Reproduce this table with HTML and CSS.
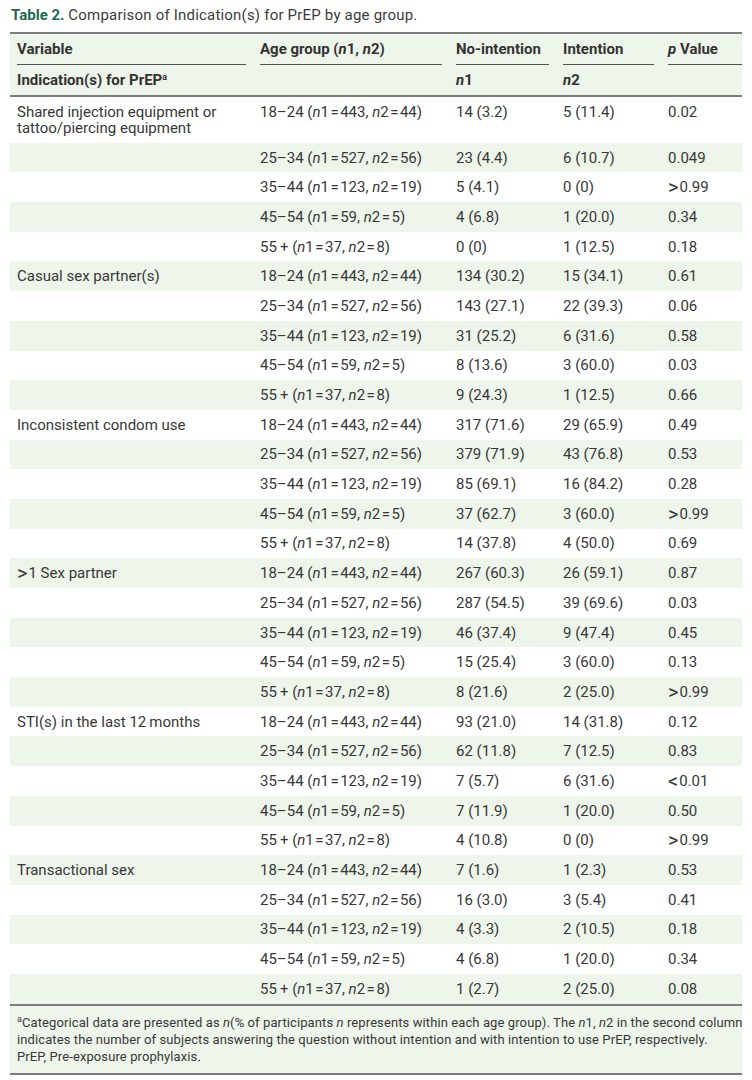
FILE: index.html
```html
<!DOCTYPE html>
<html>
<head>
<meta charset="utf-8">
<link rel="stylesheet" href="styles.css">
</head>
<body>
<div class="wrap">
<p class="caption"><span class="label">Table 2.</span> Comparison of Indication(s) for PrEP by age group.</p>
<table class="tbl">
<colgroup>
<col class="c1"><col class="c2"><col class="c3"><col class="c4"><col class="c5">
</colgroup>
<thead>
<tr class="h1">
<th><div class="u">Variable</div></th>
<th><div class="u">Age group (<i>n</i>1, <i>n</i>2)</div></th>
<th><div class="u">No-intention</div></th>
<th><div class="u">Intention</div></th>
<th class="last"><div class="u"><i>p</i> Value</div></th>
</tr>
<tr class="h2">
<th>Indication(s) for PrEP<sup>a</sup></th>
<th></th>
<th><i>n</i>1</th>
<th><i>n</i>2</th>
<th class="last"></th>
</tr>
</thead>
<tbody>
<tr><td>Shared injection equipment or tattoo/piercing equipment</td><td>18–24 (<i>n</i>1&#8202;=&#8202;443, <i>n</i>2&#8202;=&#8202;44)</td><td>14 (3.2)</td><td>5 (11.4)</td><td class="last">0.02</td></tr>
<tr class="g"><td></td><td>25–34 (<i>n</i>1&#8202;=&#8202;527, <i>n</i>2&#8202;=&#8202;56)</td><td>23 (4.4)</td><td>6 (10.7)</td><td class="last">0.049</td></tr>
<tr><td></td><td>35–44 (<i>n</i>1&#8202;=&#8202;123, <i>n</i>2&#8202;=&#8202;19)</td><td>5 (4.1)</td><td>0 (0)</td><td class="last"><span class="op">&gt;</span>0.99</td></tr>
<tr class="g"><td></td><td>45–54 (<i>n</i>1&#8202;=&#8202;59, <i>n</i>2&#8202;=&#8202;5)</td><td>4 (6.8)</td><td>1 (20.0)</td><td class="last">0.34</td></tr>
<tr><td></td><td>55&#8201;+ (<i>n</i>1&#8202;=&#8202;37, <i>n</i>2&#8202;=&#8202;8)</td><td>0 (0)</td><td>1 (12.5)</td><td class="last">0.18</td></tr>

<tr class="g"><td>Casual sex partner(s)</td><td>18–24 (<i>n</i>1&#8202;=&#8202;443, <i>n</i>2&#8202;=&#8202;44)</td><td>134 (30.2)</td><td>15 (34.1)</td><td class="last">0.61</td></tr>
<tr><td></td><td>25–34 (<i>n</i>1&#8202;=&#8202;527, <i>n</i>2&#8202;=&#8202;56)</td><td>143 (27.1)</td><td>22 (39.3)</td><td class="last">0.06</td></tr>
<tr class="g"><td></td><td>35–44 (<i>n</i>1&#8202;=&#8202;123, <i>n</i>2&#8202;=&#8202;19)</td><td>31 (25.2)</td><td>6 (31.6)</td><td class="last">0.58</td></tr>
<tr><td></td><td>45–54 (<i>n</i>1&#8202;=&#8202;59, <i>n</i>2&#8202;=&#8202;5)</td><td>8 (13.6)</td><td>3 (60.0)</td><td class="last">0.03</td></tr>
<tr class="g"><td></td><td>55&#8201;+ (<i>n</i>1&#8202;=&#8202;37, <i>n</i>2&#8202;=&#8202;8)</td><td>9 (24.3)</td><td>1 (12.5)</td><td class="last">0.66</td></tr>

<tr><td>Inconsistent condom use</td><td>18–24 (<i>n</i>1&#8202;=&#8202;443, <i>n</i>2&#8202;=&#8202;44)</td><td>317 (71.6)</td><td>29 (65.9)</td><td class="last">0.49</td></tr>
<tr class="g"><td></td><td>25–34 (<i>n</i>1&#8202;=&#8202;527, <i>n</i>2&#8202;=&#8202;56)</td><td>379 (71.9)</td><td>43 (76.8)</td><td class="last">0.53</td></tr>
<tr><td></td><td>35–44 (<i>n</i>1&#8202;=&#8202;123, <i>n</i>2&#8202;=&#8202;19)</td><td>85 (69.1)</td><td>16 (84.2)</td><td class="last">0.28</td></tr>
<tr class="g"><td></td><td>45–54 (<i>n</i>1&#8202;=&#8202;59, <i>n</i>2&#8202;=&#8202;5)</td><td>37 (62.7)</td><td>3 (60.0)</td><td class="last"><span class="op">&gt;</span>0.99</td></tr>
<tr><td></td><td>55&#8201;+ (<i>n</i>1&#8202;=&#8202;37, <i>n</i>2&#8202;=&#8202;8)</td><td>14 (37.8)</td><td>4 (50.0)</td><td class="last">0.69</td></tr>

<tr class="g"><td><span class="op">&gt;</span>1 Sex partner</td><td>18–24 (<i>n</i>1&#8202;=&#8202;443, <i>n</i>2&#8202;=&#8202;44)</td><td>267 (60.3)</td><td>26 (59.1)</td><td class="last">0.87</td></tr>
<tr><td></td><td>25–34 (<i>n</i>1&#8202;=&#8202;527, <i>n</i>2&#8202;=&#8202;56)</td><td>287 (54.5)</td><td>39 (69.6)</td><td class="last">0.03</td></tr>
<tr class="g"><td></td><td>35–44 (<i>n</i>1&#8202;=&#8202;123, <i>n</i>2&#8202;=&#8202;19)</td><td>46 (37.4)</td><td>9 (47.4)</td><td class="last">0.45</td></tr>
<tr><td></td><td>45–54 (<i>n</i>1&#8202;=&#8202;59, <i>n</i>2&#8202;=&#8202;5)</td><td>15 (25.4)</td><td>3 (60.0)</td><td class="last">0.13</td></tr>
<tr class="g"><td></td><td>55&#8201;+ (<i>n</i>1&#8202;=&#8202;37, <i>n</i>2&#8202;=&#8202;8)</td><td>8 (21.6)</td><td>2 (25.0)</td><td class="last"><span class="op">&gt;</span>0.99</td></tr>

<tr><td>STI(s) in the last 12&#8201;months</td><td>18–24 (<i>n</i>1&#8202;=&#8202;443, <i>n</i>2&#8202;=&#8202;44)</td><td>93 (21.0)</td><td>14 (31.8)</td><td class="last">0.12</td></tr>
<tr class="g"><td></td><td>25–34 (<i>n</i>1&#8202;=&#8202;527, <i>n</i>2&#8202;=&#8202;56)</td><td>62 (11.8)</td><td>7 (12.5)</td><td class="last">0.83</td></tr>
<tr><td></td><td>35–44 (<i>n</i>1&#8202;=&#8202;123, <i>n</i>2&#8202;=&#8202;19)</td><td>7 (5.7)</td><td>6 (31.6)</td><td class="last"><span class="op">&lt;</span>0.01</td></tr>
<tr class="g"><td></td><td>45–54 (<i>n</i>1&#8202;=&#8202;59, <i>n</i>2&#8202;=&#8202;5)</td><td>7 (11.9)</td><td>1 (20.0)</td><td class="last">0.50</td></tr>
<tr><td></td><td>55&#8201;+ (<i>n</i>1&#8202;=&#8202;37, <i>n</i>2&#8202;=&#8202;8)</td><td>4 (10.8)</td><td>0 (0)</td><td class="last"><span class="op">&gt;</span>0.99</td></tr>

<tr class="g"><td>Transactional sex</td><td>18–24 (<i>n</i>1&#8202;=&#8202;443, <i>n</i>2&#8202;=&#8202;44)</td><td>7 (1.6)</td><td>1 (2.3)</td><td class="last">0.53</td></tr>
<tr><td></td><td>25–34 (<i>n</i>1&#8202;=&#8202;527, <i>n</i>2&#8202;=&#8202;56)</td><td>16 (3.0)</td><td>3 (5.4)</td><td class="last">0.41</td></tr>
<tr class="g"><td></td><td>35–44 (<i>n</i>1&#8202;=&#8202;123, <i>n</i>2&#8202;=&#8202;19)</td><td>4 (3.3)</td><td>2 (10.5)</td><td class="last">0.18</td></tr>
<tr><td></td><td>45–54 (<i>n</i>1&#8202;=&#8202;59, <i>n</i>2&#8202;=&#8202;5)</td><td>4 (6.8)</td><td>1 (20.0)</td><td class="last">0.34</td></tr>
<tr class="g"><td></td><td>55&#8201;+ (<i>n</i>1&#8202;=&#8202;37, <i>n</i>2&#8202;=&#8202;8)</td><td>1 (2.7)</td><td>2 (25.0)</td><td class="last">0.08</td></tr>
</tbody>
</table>
<div class="foot">
<p class="fl"><sup>a</sup>Categorical data are presented as <i>n</i>(% of participants <i>n</i> represents within each age group). The <i>n</i>1, <i>n</i>2 in the second column</p>
<p class="fl">indicates the number of subjects answering the question without intention and with intention to use PrEP, respectively.</p>
<p class="fl">PrEP, Pre-exposure prophylaxis.</p>
</div>
</div>
</body>
</html>
```
FILE: styles.css
```css
html, body {
  margin: 0;
  padding: 0;
  background: #ffffff;
}
body {
  font-family: Roboto, "Liberation Sans", sans-serif;
  color: #383838;
  font-size: 15px;
}
.wrap {
  padding: 6px 10px 0 10px;
  width: 732px;
}
.caption {
  margin: 0;
  font-size: 15px;
  letter-spacing: 0.2px;
  line-height: 18px;
  height: 26px;
  padding-left: 1px;
  color: #3c3c3c;
}
.caption .label {
  font-weight: 700;
  color: #1d6a4c;
  letter-spacing: 0;
}
.tbl {
  width: 732px;
  border-collapse: collapse;
  table-layout: fixed;
}
.c1 { width: 243px; }
.c2 { width: 196px; }
.c3 { width: 107px; }
.c4 { width: 105px; }
.c5 { width: 81px; }
thead tr {
  background: #eef5ea;
}
thead th {
  text-align: left;
  font-weight: 700;
  color: #333;
  padding: 0 7px;
  line-height: 16px;
  font-size: 15px;
}
.tbl .last {
  padding-right: 0;
}
.h1 {
  border-top: 2px solid #7c7c7c;
}
.h1 th {
  padding-top: 7px;
}
.h1 .u {
  padding-bottom: 7px;
  border-bottom: 1px solid #555;
}
.h2 {
  border-bottom: 2px solid #7c7c7c;
}
.h2 th {
  padding-top: 7px;
  padding-bottom: 7px;
}
sup {
  font-size: 9px;
  vertical-align: 5px;
  line-height: 0;
  font-weight: 400;
}
.h2 sup { font-weight: 700; }
tbody td {
  padding: 6.85px 7px;
  line-height: 16px;
  vertical-align: top;
  font-size: 15px;
}
tbody tr.g {
  background: #eef5ea;
}
tbody tr:last-child {
  border-bottom: 2px solid #7c7c7c;
}
.op {
  font-size: 20px;
  position: relative;
  top: 2px;
  line-height: 0;
  margin-right: 1px;
}
.foot {
  background: #eef5ea;
  border-bottom: 2px solid #7c7c7c;
  padding: 8px 0 8px 7px;
}
.foot .fl {
  margin: 0;
  font-size: 13px;
  letter-spacing: 0.1px;
  line-height: 17px;
  white-space: nowrap;
}
```
